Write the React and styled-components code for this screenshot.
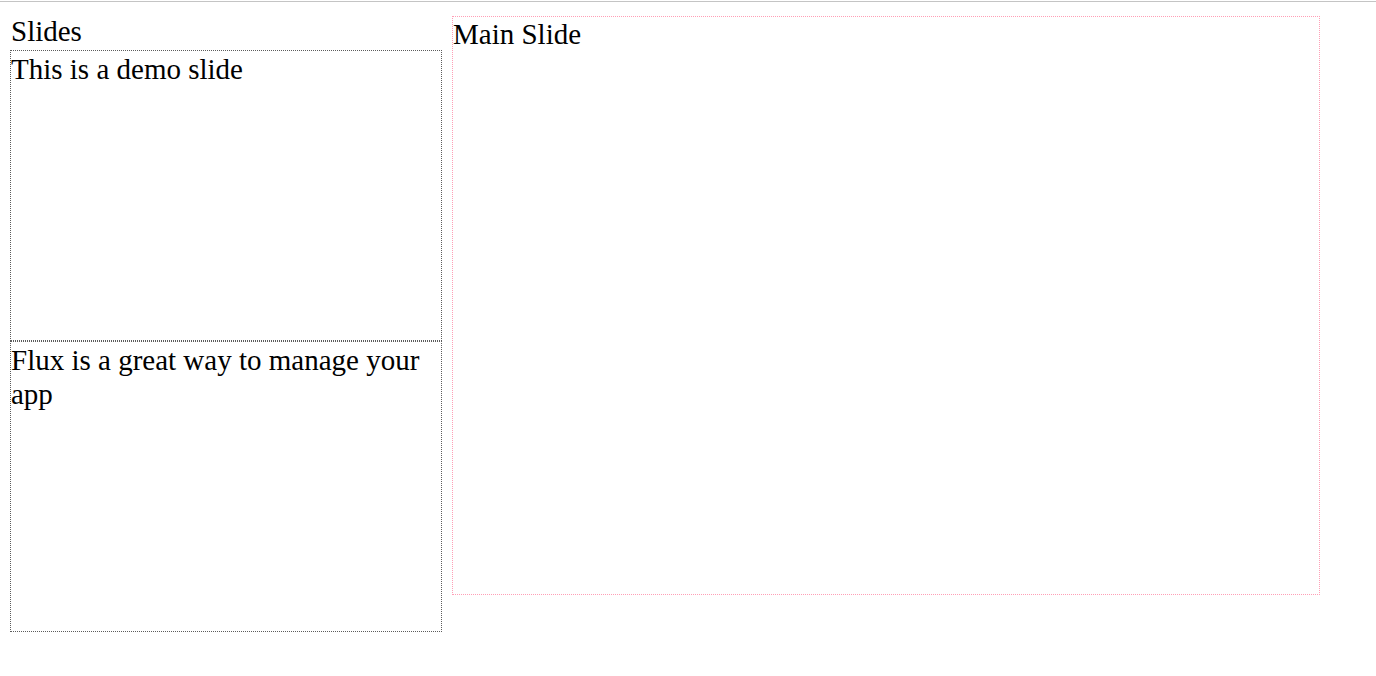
import React from "react"
import styled, { createGlobalStyle } from "styled-components"

const slides = [
  { id: 1, text: "This is a demo slide" },
  { id: 2, text: "Flux is a great way to manage your app" },
]

const GlobalStyle = createGlobalStyle`
  html, body {
    margin: 0;
    padding: 0;
    background: #fff;
  }

  body {
    font-family: "Liberation Serif", "Times New Roman", serif;
    font-size: 29px;
    color: #000;
  }
`

export default function App() {
  return (
    <Page>
      <GlobalStyle />
      <TopRule />
      <Layout>
        <SlideList>
          <ListTitle>Slides</ListTitle>
          {slides.map((slide) => (
            <SlideCard key={slide.id}>{slide.text}</SlideCard>
          ))}
        </SlideList>
        <MainSlide>Main Slide</MainSlide>
      </Layout>
    </Page>
  )
}

const Page = styled.div`
  min-height: 676px;
`

const TopRule = styled.div`
  margin-top: 1px;
  height: 1px;
  background: #c4c4c4;
`

const Layout = styled.div`
  display: flex;
  align-items: flex-start;
  gap: 10px;
  padding: 13px 10px 0;
`

const SlideList = styled.div`
  display: flex;
  flex-direction: column;
  width: 432px;
`

const ListTitle = styled.div`
  line-height: 31px;
  margin: 1px 1px 3px;
`

const SlideCard = styled.div`
  box-sizing: border-box;
  height: 291px;
  padding-top: 1px;
  border: 1px dotted #5c5c5c;
  line-height: 34px;
`

const MainSlide = styled.div`
  box-sizing: border-box;
  width: 868px;
  height: 579px;
  margin-top: 1px;
  padding-top: 2px;
  border: 1px dotted #ff9fb6;
  line-height: 31px;
`
